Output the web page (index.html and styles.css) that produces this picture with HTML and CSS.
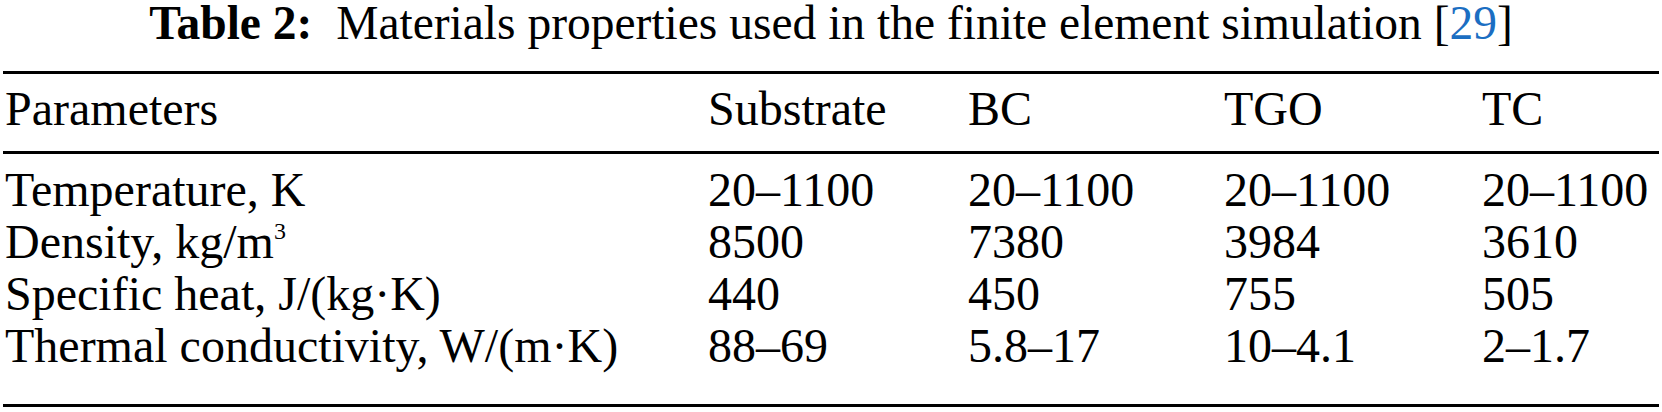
FILE: index.html
```html
<!DOCTYPE html>
<html lang="en">
<head>
  <meta charset="UTF-8">
  <title>Table 2</title>
  <link rel="stylesheet" href="styles.css">
</head>
<body>

  <div class="table-wrap">
    <!-- Caption -->
    <div class="caption">
      <span class="label">Table 2:</span>&nbsp; Materials properties used in the finite element simulation [<a class="ref" href="#ref29">29</a>]
    </div>

    <!-- Properties table -->
    <table class="props">
      <colgroup>
        <col class="c-param">
        <col class="c-sub">
        <col class="c-bc">
        <col class="c-tgo">
        <col class="c-tc">
      </colgroup>
      <thead>
        <tr>
          <th>Parameters</th>
          <th>Substrate</th>
          <th>BC</th>
          <th>TGO</th>
          <th>TC</th>
        </tr>
      </thead>
      <tbody>
        <tr class="first">
          <td>Temperature, K</td>
          <td>20–1100</td>
          <td>20–1100</td>
          <td>20–1100</td>
          <td>20–1100</td>
        </tr>
        <tr>
          <td>Density, kg/m<sup>3</sup></td>
          <td>8500</td>
          <td>7380</td>
          <td>3984</td>
          <td>3610</td>
        </tr>
        <tr>
          <td>Specific heat, J/(kg·K)</td>
          <td>440</td>
          <td>450</td>
          <td>755</td>
          <td>505</td>
        </tr>
        <tr class="last">
          <td>Thermal conductivity, W/(m·K)</td>
          <td>88–69</td>
          <td>5.8–17</td>
          <td>10–4.1</td>
          <td>2–1.7</td>
        </tr>
      </tbody>
    </table>
  </div>

</body>
</html>
```

FILE: styles.css
```css
* {
  box-sizing: border-box;
}
body {
  margin: 0;
  padding: 0;
  background: #fff;
  color: #000;
  font-family: "Liberation Serif", "Times New Roman", serif;
}

/* Caption */
.caption {
  text-align: center;
  font-size: 47.5px;
  line-height: 46px;
  margin-bottom: 25px;
  white-space: nowrap;
}
.caption .label {
  font-weight: bold;
}
.caption .ref {
  color: #1b6ec2;
  text-decoration: none;
}

/* Table */
.props {
  margin-left: 3px;
  width: 1656px;
  table-layout: fixed;
  border-collapse: separate;
  border-spacing: 0;
  border-top: 3px solid #000;
  border-bottom: 3px solid #000;
  font-size: 48px;
  line-height: 52px;
}
.c-param { width: 703px; }
.c-sub { width: 260px; }
.c-bc { width: 256px; }
.c-tgo { width: 258px; }
.c-tc { width: 179px; }

.props th,
.props td {
  text-align: left;
  font-weight: normal;
  padding: 0 0 0 2px;
  white-space: nowrap;
}
.props th {
  padding-top: 9px;
  padding-bottom: 17px;
  line-height: 51px;
  border-bottom: 3px solid #000;
}
.props tr.first td {
  padding-top: 10px;
}
.props tr.last td {
  padding-bottom: 32px;
}
.props sup {
  font-size: 0.5em;
  line-height: 0;
  vertical-align: 0.8em;
}
```
